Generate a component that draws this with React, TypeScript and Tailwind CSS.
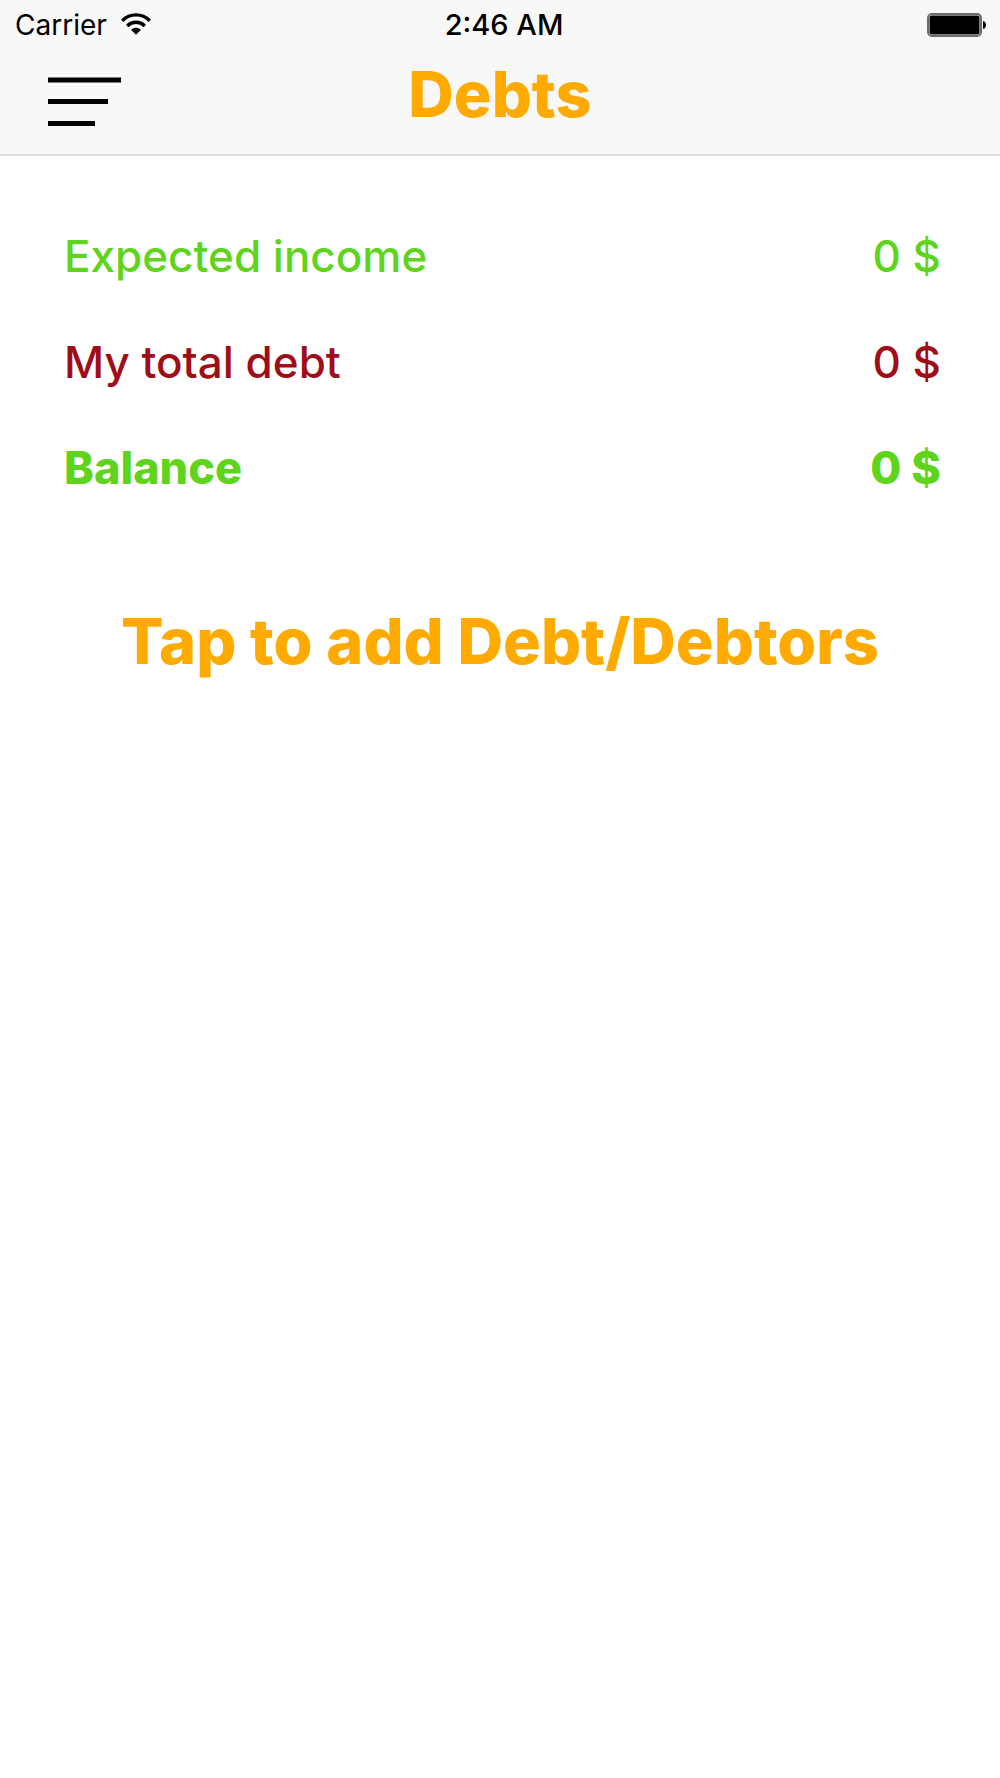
import React from 'react';

interface SummaryRow {
  label: string;
  amount: number;
  className: string;
}

const rows: SummaryRow[] = [
  { label: 'Expected income', amount: 0, className: 'text-[44px] text-[#5fd41d] font-medium' },
  { label: 'My total debt', amount: 0, className: 'text-[44px] text-[#9f0e18] font-medium' },
  { label: 'Balance', amount: 0, className: 'text-[45px] text-[#5fd41d] font-extrabold' },
];

const WifiIcon = () => (
  <svg width="30" height="24" viewBox="0 0 30 24" fill="none" stroke="black" strokeWidth="3.4">
    <path d="M1.2 7.7C9 -0.1 21 -0.1 28.8 7.7" />
    <path d="M6.2 12.9C11.2 8.1 18.8 8.1 23.8 12.9" />
    <path d="M10 16.8C12.6 14.1 17.4 14.1 20 16.8L15 21.8Z" fill="black" stroke="none" />
  </svg>
);

const BatteryIcon = () => (
  <svg width="60" height="24" viewBox="0 0 60 24">
    <rect x="1" y="1" width="53" height="22" rx="4" fill="white" stroke="#6b6b6b" strokeWidth="2" />
    <rect x="2.5" y="2.5" width="50" height="19" rx="2" fill="black" />
    <path d="M56 8C60 8.5 60 15.5 56 16Z" fill="black" />
  </svg>
);

const StatusBar: React.FC = () => (
  <div className="grid grid-cols-3 items-center h-[50px] pl-[15px] pr-[13px] text-[28px] leading-8 text-black">
    <div className="flex items-center gap-3.5">
      <span>Carrier</span>
      <WifiIcon />
    </div>
    <span className="pl-1.5 text-center text-[29px] font-medium">2:46 AM</span>
    <div className="flex justify-end">
      <BatteryIcon />
    </div>
  </div>
);

const App: React.FC = () => {
  return (
    <div className="min-h-screen bg-white font-['Inter','Liberation_Sans',sans-serif]">
      {/* Header */}
      <header className="bg-[#f8f8f8] border-b-2 border-[#dcdcdc]">
        <StatusBar />
        <div className="grid grid-cols-3 items-center h-[104px] px-12">
          <button type="button" aria-label="Menu" className="justify-self-start">
            <svg width="73" height="50" viewBox="0 0 73 50" fill="black">
              <rect y="0.5" width="73" height="5" />
              <rect y="22" width="60" height="5" />
              <rect y="44" width="47" height="5" />
            </svg>
          </button>
          <h1 className="pb-4 text-center text-[63px] leading-[72px] font-extrabold text-[#ffaa00]">Debts</h1>
        </div>
      </header>

      {/* Totals */}
      <main>
        <dl className="pt-[47px] pl-16 pr-[59px]">
          {rows.map((row) => (
            <div
              key={row.label}
              className={`flex items-center justify-between h-[106px] leading-[56px] ${row.className}`}
            >
              <dt>{row.label}</dt>
              <dd>{row.amount} $</dd>
            </div>
          ))}
        </dl>

        <button
          type="button"
          className="block w-full mt-20 text-center text-[63px] leading-[80px] font-extrabold text-[#ffaa00]"
        >
          Tap to add Debt/Debtors
        </button>
      </main>
    </div>
  );
};

export default App;
